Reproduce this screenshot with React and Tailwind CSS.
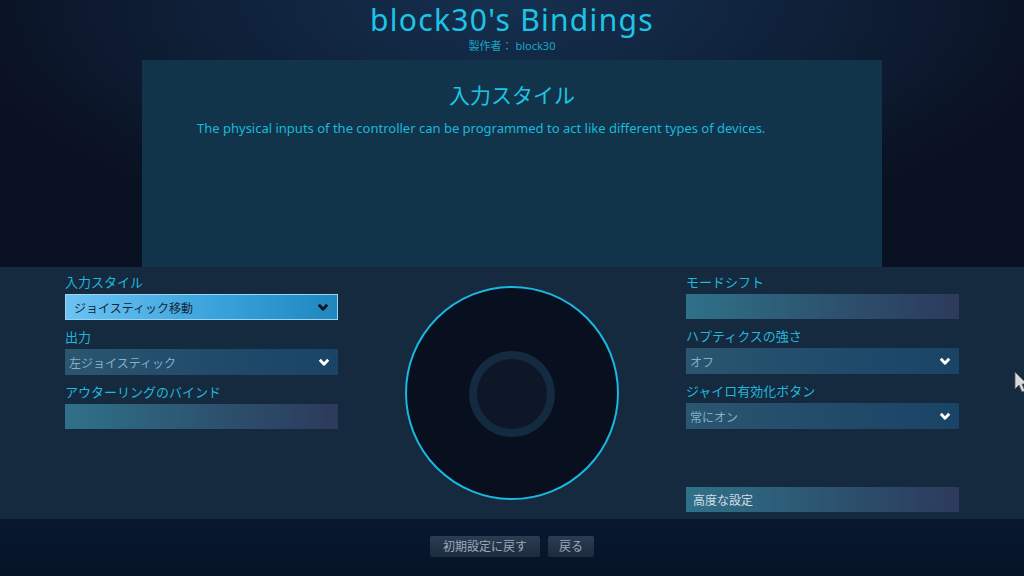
const font = { fontFamily: '"Noto Sans", "Noto Sans CJK JP", sans-serif' }

function Chevron({ dark }) {
  return (
    <svg width="12" height="9" viewBox="0 0 12 9" className="shrink-0">
      <path d="M1.8 1.8 L6 6.3 L10.2 1.8" fill="none" stroke={dark ? '#0b1420' : '#ffffff'} strokeWidth="2.8" strokeLinejoin="round" />
    </svg>
  )
}

function Select({ value, active }) {
  if (active) {
    return (
      <div className="h-[26px] flex items-center justify-between pl-[8px] pr-[8px] border border-[#9ad6f2] bg-[linear-gradient(90deg,#6cc3f3,#3aa3dc_55%,#1f87be)]">
        <span className="text-[12px] pt-[3px] text-[#172536]">{value}</span>
        <Chevron dark />
      </div>
    )
  }
  return (
    <div className="h-[26px] flex items-center justify-between pl-[4px] pr-[8px] bg-[linear-gradient(90deg,#2a566f,#1f4a6a_60%,#1a4466)]">
      <span className="text-[12px] pt-[3px] text-[#86aecb]">{value}</span>
      <Chevron />
    </div>
  )
}

function EmptyBox({ children }) {
  return (
    <div className="h-[25px] flex items-center pl-[7px] bg-[linear-gradient(90deg,#2f7189,#2c4f6c_60%,#2d3a5c)]">
      <span className="text-[12px] pt-[2px] text-[#d2dde6]">{children}</span>
    </div>
  )
}

function Field({ label, children }) {
  return (
    <div className="flex flex-col">
      <div className="h-[18px] leading-[18px] text-[13px] text-[#22b7dc] mb-[3px]">{label}</div>
      {children}
    </div>
  )
}

export default function App() {
  return (
    <div className="w-[1024px] h-[576px] flex flex-col overflow-hidden relative bg-[#0a1122]" style={font}>
      {/* header + info panel */}
      <div className="h-[267px] flex flex-col bg-[radial-gradient(ellipse_55%_90%_at_50%_0%,#15304f_0%,#0f2038_55%,#0a1122_100%)]">
        <div className="h-[60px] flex flex-col items-center">
          <div className="text-[30px] leading-[34px] pt-[3px] tracking-[1.3px] text-[#1ec4e6]">block30's Bindings</div>
          <div className="text-[11px] leading-[14px] text-[#1aa6c8] mt-[2px]">製作者： block30</div>
        </div>
        <div className="ml-[142px] w-[740px] flex-1 bg-[#12344a] flex flex-col">
          <div className="text-center text-[21px] leading-[30px] mt-[20px] text-[#1ec4e6]">入力スタイル</div>
          <div className="pl-[55px] mt-[9px] text-[13px] leading-[18px] text-[#1ab8dc]">
            The physical inputs of the controller can be programmed to act like different types of devices.
          </div>
        </div>
      </div>

      {/* bindings area */}
      <div className="h-[252px] bg-[#15293f] flex justify-between px-[65px]">
        <div className="w-[273px] flex flex-col gap-[8px] pt-[6px]">
          <Field label="入力スタイル">
            <Select value="ジョイスティック移動" active />
          </Field>
          <Field label="出力">
            <Select value="左ジョイスティック" />
          </Field>
          <Field label="アウターリングのバインド">
            <EmptyBox />
          </Field>
        </div>

        <div className="pt-[19px]">
          <div className="w-[214px] h-[214px] rounded-full border-2 border-[#1ab8e0] bg-[#080f1e] flex items-center justify-center">
            <div className="w-[86px] h-[86px] rounded-full border-[8px] border-[#142a40] bg-[#0e1727] mt-[2px]" />
          </div>
        </div>

        <div className="w-[273px] flex flex-col gap-[8px] pt-[6px] pb-[7px]">
          <Field label="モードシフト">
            <EmptyBox />
          </Field>
          <Field label="ハプティクスの強さ">
            <Select value="オフ" />
          </Field>
          <Field label="ジャイロ有効化ボタン">
            <Select value="常にオン" />
          </Field>
          <div className="mt-auto">
            <EmptyBox>高度な設定</EmptyBox>
          </div>
        </div>
      </div>

      {/* footer */}
      <div className="flex-1 bg-[linear-gradient(180deg,#0b1628_0px,#07182f_3px,#061426_100%)] flex justify-center gap-[8px] pt-[17px]">
        <button className="h-[21px] w-[110px] rounded-[2px] text-[12px] text-[#9aaabb] bg-[linear-gradient(180deg,#2b3d52,#1c2b3d)]">初期設定に戻す</button>
        <button className="h-[21px] w-[46px] rounded-[2px] text-[12px] text-[#9aaabb] bg-[linear-gradient(180deg,#2b3d52,#1c2b3d)]">戻る</button>
      </div>

      {/* mouse pointer */}
      <svg className="absolute left-[1014px] top-[371px]" width="14" height="22" viewBox="0 0 14 22">
        <path d="M1 1 L1 18 L5 14 L8 21 L11 20 L8 13 L13 13 Z" fill="#d8d8d8" stroke="#555" strokeWidth="0.8" />
      </svg>
    </div>
  )
}
